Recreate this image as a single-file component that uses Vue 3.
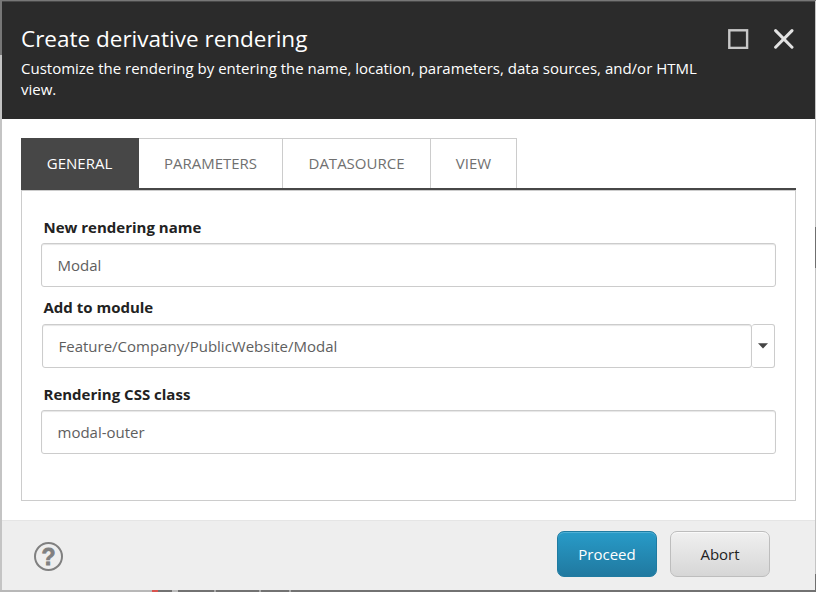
<script setup>
import { ref } from 'vue'

const tabs = ['GENERAL', 'PARAMETERS', 'DATASOURCE', 'VIEW']
const active = ref('GENERAL')
const name = ref('Modal')
const moduleName = ref('Feature/Company/PublicWebsite/Modal')
const cssClass = ref('modal-outer')
</script>

<template>
  <div class="backdrop">
    <section class="dialog">
      <header class="head">
        <div class="titles">
          <h1>Create derivative rendering</h1>
          <p>Customize the rendering by entering the name, location, parameters, data sources, and/or HTML view.</p>
        </div>
        <div class="window-actions">
          <svg width="21" height="20" viewBox="0 0 21 20"><rect x="1.3" y="1.3" width="17.8" height="17.6" fill="none" stroke="#c8c8c8" stroke-width="2.4" /></svg>
          <svg width="20" height="20" viewBox="0 0 20 20"><path d="M1.6 1.6 18 18.2M18 1.6 1.6 18.2" fill="none" stroke="#e2e2e2" stroke-width="3" stroke-linecap="round" /></svg>
        </div>
      </header>

      <main class="body">
        <nav class="tabs">
          <button
            v-for="t in tabs"
            :key="t"
            :class="['tab', t.toLowerCase(), { active: t === active }]"
            @click="active = t"
          ><span>{{ t }}</span></button>
        </nav>
        <div class="panel">
          <label class="l1"><span>New rendering name</span></label>
          <input v-model="name" class="field" type="text" />
          <label class="l2"><span>Add to module</span></label>
          <div class="combo">
            <input v-model="moduleName" class="field" type="text" />
            <button class="drop">
              <svg width="10" height="6" viewBox="0 0 10 6"><path d="M0 .3h10L5 5.5z" fill="#444" /></svg>
            </button>
          </div>
          <label class="l3"><span>Rendering CSS class</span></label>
          <input v-model="cssClass" class="field css" type="text" />
        </div>
      </main>

      <footer class="foot">
        <div class="help">?</div>
        <button class="btn primary"><span>Proceed</span></button>
        <button class="btn"><span>Abort</span></button>
      </footer>
    </section>
  </div>
</template>

<style>
body {
  margin: 0;
  overflow: hidden;
}
</style>

<style scoped>
* {
  box-sizing: border-box;
}
.backdrop {
  width: 816px;
  height: 592px;
  padding: 1px 1px 2px 2px;
  font-family: "Open Sans", sans-serif;
  background:
    linear-gradient(#6f6f6f, #6f6f6f) 815px 227px / 1px 41px no-repeat,
    linear-gradient(#6f6f6f, #6f6f6f) 815px 574px / 1px 18px no-repeat,
    linear-gradient(#777, #777) 0 0 / 816px 1px no-repeat,
    linear-gradient(#777, #777) 0 0 / 2px 55px no-repeat,
    linear-gradient(#d9534f, #d9534f) 152px 590px / 6px 2px no-repeat,
    linear-gradient(#bbb, #bbb) 172px 590px / 6px 2px no-repeat,
    linear-gradient(#aaa, #aaa) 214px 590px / 2px 2px no-repeat,
    linear-gradient(#aaa, #aaa) 259px 590px / 2px 2px no-repeat,
    linear-gradient(#aaa, #aaa) 289px 590px / 2px 2px no-repeat,
    linear-gradient(90deg, #b8b8b8 0, #b8b8b8 152px, #727272 158px) 0 590px / 816px 2px no-repeat,
    #c4c4c4;
}
.dialog {
  display: flex;
  flex-direction: column;
  height: 100%;
  background: #fff;
}
.head {
  display: flex;
  justify-content: space-between;
  height: 118px;
  padding: 21px 21px 0 19px;
  background: #2b2b2b;
  border-top: 1px solid #494949;
  color: #fff;
}
.titles {
  width: 690px;
}
h1 {
  margin: 0;
  font-size: 22.5px;
  line-height: 32px;
  font-weight: 400;
  white-space: nowrap;
}
p {
  margin: 3px 0 0;
  font-size: 15px;
  line-height: 21px;
}
.window-actions {
  display: flex;
  gap: 25px;
  padding-top: 6px;
}
.window-actions svg {
  display: block;
}
.body {
  flex: 1;
  padding: 19px 19px 0;
}
button {
  font-family: inherit;
  margin: 0;
  padding: 0;
}
.tabs {
  display: flex;
  height: 52px;
  border-bottom: 2px solid #474747;
}
.tab {
  height: 50px;
  padding-bottom: 2px;
  border: 1px solid #ccc;
  border-left: 0;
  border-bottom: 0;
  background: #fff;
  color: #707070;
  font-size: 15px;
}
.tab span {
  display: block;
  white-space: nowrap;
}
.tab.active {
  background: #474747;
  border-color: #474747;
  color: #fff;
}
.general { width: 118px; }
.parameters { width: 144px; }
.datasource { width: 148px; }
.view { width: 86px; }
.panel {
  height: 311px;
  padding: 26px 19px 0;
  border: 1px solid #ccc;
}
label {
  display: block;
  height: 26px;
  padding-left: 2.5px;
  color: #222;
  font-size: 15px;
  line-height: 20px;
  font-weight: 700;
}
.field {
  display: block;
  width: 100%;
  height: 44px;
  margin: 0;
  padding: 0 15px 1px 15.5px;
  border: 1px solid #ccc;
  border-radius: 3px;
  outline: none;
  background: #fff;
  box-shadow: inset 0 1px 1px rgba(0, 0, 0, 0.1);
  color: #5e5e5e;
  font-family: inherit;
  font-size: 15px;
}
.l2 {
  height: 37px;
  padding-top: 10px;
}
.l3 {
  height: 42px;
  padding-top: 16px;
}
.combo {
  display: flex;
  padding: 0 1px;
}
.combo .field {
  flex: 1;
}
.drop {
  display: flex;
  align-items: center;
  justify-content: center;
  width: 23px;
  height: 44px;
  border: 1px solid #ccc;
  border-left: 0;
  border-radius: 3px;
  background: #fff;
}
.foot {
  display: flex;
  height: 70px;
  padding: 10px 45px 0 32px;
  gap: 13px;
  border-top: 1px solid #e5e5e5;
  background: #eee;
}
.help {
  width: 29px;
  height: 29px;
  margin: 11px auto 0 0;
  border: 2px solid #808080;
  border-radius: 50%;
  color: #808080;
  font-family: "Liberation Sans", sans-serif;
  font-size: 23px;
  line-height: 26px;
  font-weight: 700;
  text-align: center;
  -webkit-text-stroke: 0.8px #808080;
}
.btn {
  width: 100px;
  height: 46px;
  border: 1px solid #bdbdbd;
  border-radius: 7px;
  background: linear-gradient(#f0f0f0, #d6d6d6);
  box-shadow: inset 0 1px 0 #fafafa;
  color: #222;
  font-size: 15px;
}
.btn.primary {
  border-color: #1f7ba1;
  background: linear-gradient(#289bc8, #2079a0);
  box-shadow: inset 0 1px 0 #50b0d5;
  color: #fff;
}
</style>
